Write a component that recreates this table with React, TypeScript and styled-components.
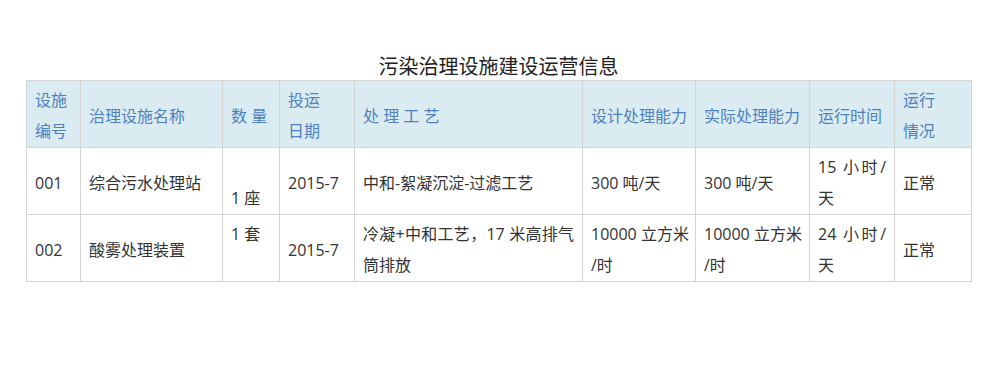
import styled, { createGlobalStyle } from "styled-components";

const GlobalStyle = createGlobalStyle`
  html, body {
    margin: 0;
    padding: 0;
    background: #ffffff;
  }
  body {
    font-family: "Open Sans", "Noto Sans CJK SC", sans-serif;
  }
`;

const Page = styled.div`
  width: 1000px;
  height: 383px;
  padding: 53px 0 0 26px;
  box-sizing: border-box;
`;

const Title = styled.h2`
  margin: 0;
  width: 945px;
  text-align: center;
  font-size: 20px;
  font-weight: 400;
  line-height: 27px;
  color: #222222;
`;

const Table = styled.table`
  width: 945px;
  border-collapse: collapse;
  table-layout: fixed;
  font-size: 16px;
  color: #333333;
`;

const HeadCell = styled.th<{ $width: number }>`
  width: ${(p) => p.$width}px;
  height: 66px;
  padding: 4px 8px 0;
  box-sizing: border-box;
  background: #daebf2;
  color: #4f81bd;
  font-weight: 400;
  text-align: left;
  line-height: 31px;
  border: 1px solid #d4d4d4;
  vertical-align: middle;
`;

const Cell = styled.td<{ $valign?: "top" | "bottom" }>`
  height: 67px;
  padding: 4px 8px 0;
  box-sizing: border-box;
  line-height: 31px;
  text-align: justify;
  border: 1px solid #d4d4d4;
  vertical-align: ${(p) => p.$valign ?? "middle"};
`;

const Line = styled.span`
  display: block;
  white-space: nowrap;
`;

const columns = [
  { label: ["设施", "编号"], width: 54 },
  { label: ["治理设施名称"], width: 142 },
  { label: ["数 量"], width: 57 },
  { label: ["投运", "日期"], width: 75 },
  { label: ["处 理 工 艺"], width: 228 },
  { label: ["设计处理能力"], width: 113 },
  { label: ["实际处理能力"], width: 114 },
  { label: ["运行时间"], width: 85 },
  { label: ["运行", "情况"], width: 77 },
];

const rows = [
  {
    id: "001",
    name: "综合污水处理站",
    count: "1 座",
    countAlign: "bottom" as const,
    date: "2015-7",
    process: "中和-絮凝沉淀-过滤工艺",
    design: ["300 吨/天"],
    actual: ["300 吨/天"],
    hours: "15 小时/天",
    status: "正常",
  },
  {
    id: "002",
    name: "酸雾处理装置",
    count: "1 套",
    countAlign: "top" as const,
    date: "2015-7",
    process: "冷凝+中和工艺，17 米高排气筒排放",
    design: ["10000 立方米", "/时"],
    actual: ["10000 立方米", "/时"],
    hours: "24 小时/天",
    status: "正常",
  },
];

const lines = (parts: string[]) =>
  parts.length > 1 ? parts.map((p) => <Line key={p}>{p}</Line>) : parts[0];

export default function App() {
  return (
    <>
      <GlobalStyle />
      <Page>
        <Title>污染治理设施建设运营信息</Title>
        <Table>
          <thead>
            <tr>
              {columns.map((c) => (
                <HeadCell key={c.label.join("")} $width={c.width}>
                  {lines(c.label)}
                </HeadCell>
              ))}
            </tr>
          </thead>
          <tbody>
            {rows.map((r) => (
              <tr key={r.id}>
                <Cell>{r.id}</Cell>
                <Cell>{r.name}</Cell>
                <Cell $valign={r.countAlign}>{r.count}</Cell>
                <Cell>{r.date}</Cell>
                <Cell>{r.process}</Cell>
                <Cell>{lines(r.design)}</Cell>
                <Cell>{lines(r.actual)}</Cell>
                <Cell>{r.hours}</Cell>
                <Cell>{r.status}</Cell>
              </tr>
            ))}
          </tbody>
        </Table>
      </Page>
    </>
  );
}
